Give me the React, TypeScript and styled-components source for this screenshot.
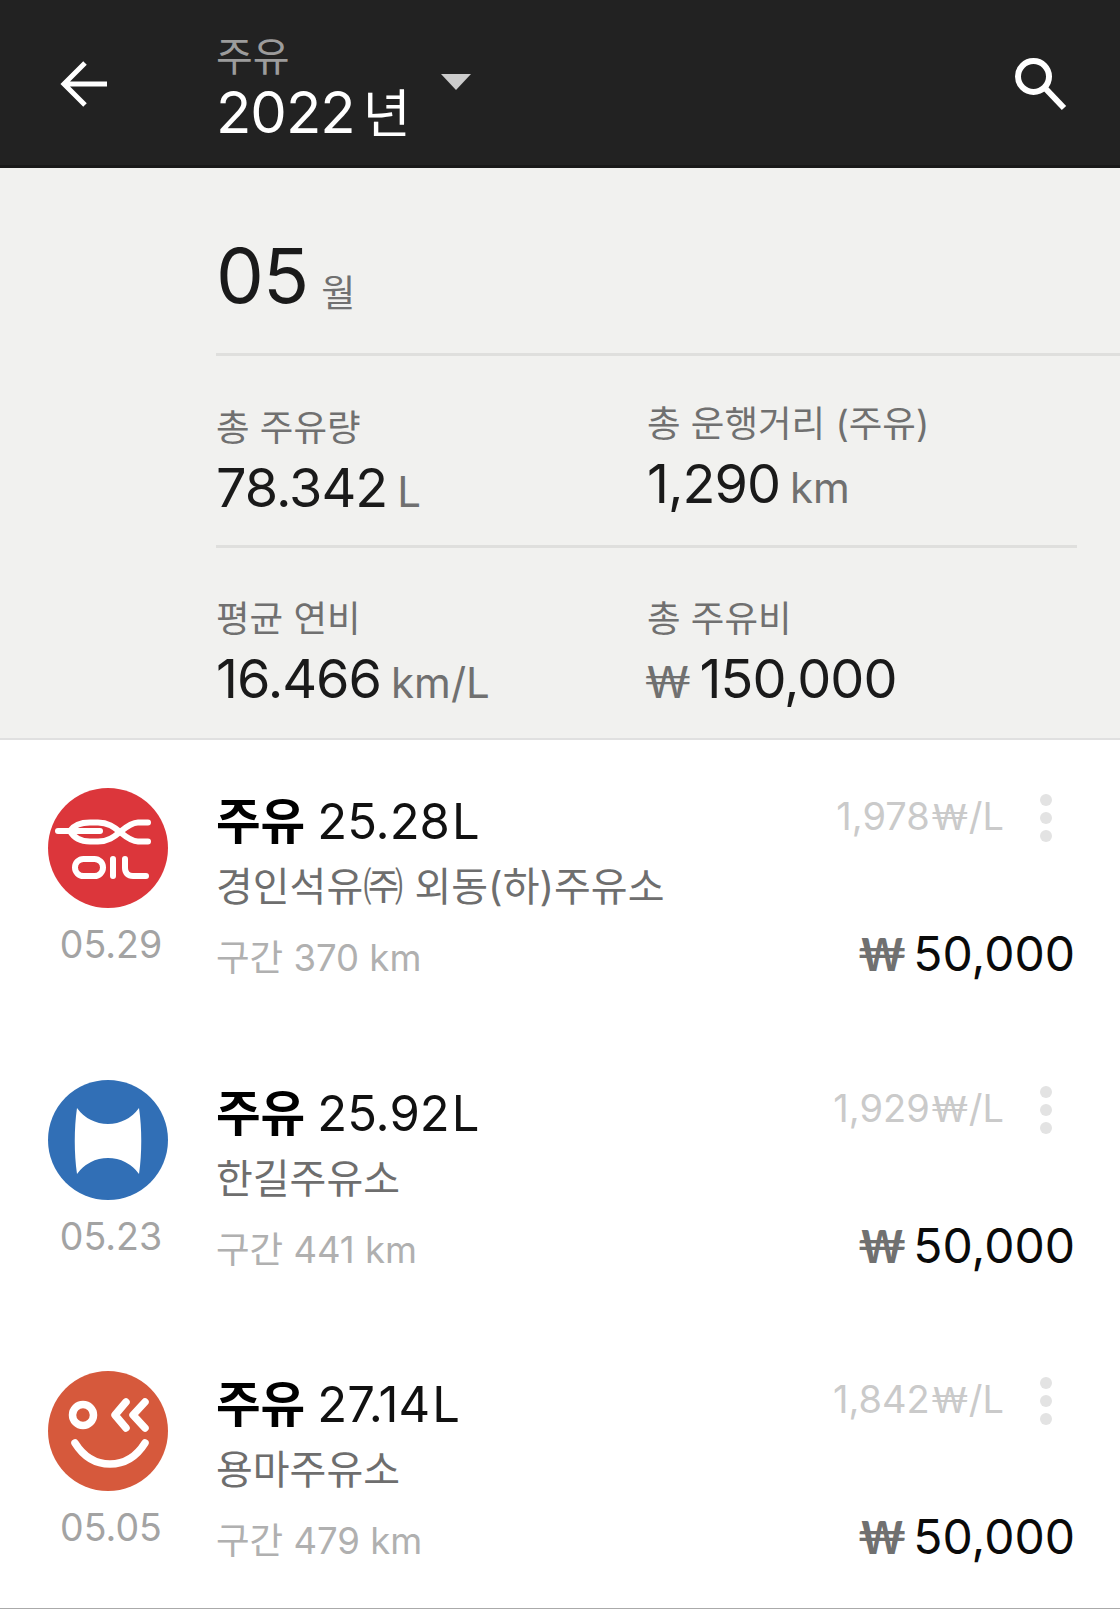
import React from "react";
import styled, { createGlobalStyle } from "styled-components";

const Global = createGlobalStyle`
  html, body { margin: 0; padding: 0; background: #fff; }
`;

const FONT = `"Inter", "Noto Sans CJK KR", sans-serif`;
const WON_FONT = `"Lato", "Inter", sans-serif`;

const Page = styled.div`
  width: 1120px;
  height: 1609px;
  box-sizing: border-box;
  overflow: hidden;
  display: flex;
  flex-direction: column;
  background: #fff;
  border-bottom: 1px solid #aaaaaa;
  font-family: ${FONT};
`;

const Header = styled.header`
  height: 165px;
  flex: none;
  background: #222222;
  border-bottom: 3px solid #191919;
  display: flex;
  align-items: flex-start;
`;

const BackButton = styled.div`
  width: 216px;
  flex: none;
  padding: 60px 0 0 60px;
  box-sizing: border-box;
  svg { display: block; }
`;

const HeaderTitle = styled.div`
  display: flex;
  flex-direction: column;
  padding-top: 34px;
  flex: 1;
`;

const HeaderSub = styled.div`
  font-size: 40px;
  line-height: 46px;
  height: 46px;
  color: #9c9c9c;
`;

const YearRow = styled.div`
  display: flex;
  align-items: baseline;
  color: #fff;
  margin-top: -4px;
`;

const Year = styled.span`
  font-size: 58px;
  line-height: 72px;
  letter-spacing: -1px;
`;

const YearUnit = styled.span`
  font-size: 52px;
  line-height: 72px;
  margin-left: 8px;
`;

const Caret = styled.div`
  width: 0;
  height: 0;
  border-left: 15px solid transparent;
  border-right: 15px solid transparent;
  border-top: 16px solid #cccccc;
  margin: -2px 0 0 30px;
  align-self: flex-start;
`;

const SearchButton = styled.div`
  padding: 58px 49px 0 0;
  svg { display: block; }
`;

const Summary = styled.section`
  flex: none;
  height: 570px;
  background: #f1f1ef;
  border-bottom: 2px solid #e0e0e0;
  padding-left: 216px;
`;

const MonthRow = styled.div`
  height: 188px;
  border-bottom: 3px solid #dfdfdd;
  display: flex;
  align-items: flex-start;
  box-sizing: border-box;
`;

const Month = styled.span`
  font-size: 76px;
  line-height: 92px;
  margin-top: 61px;
  letter-spacing: -1px;
  color: #1a1a1a;
`;

const MonthUnit = styled.span`
  font-size: 37px;
  line-height: 48px;
  margin: 102px 0 0 13px;
  color: #707070;
`;

const StatGrid = styled.div<{ $ruled?: boolean }>`
  display: grid;
  grid-template-columns: 431px 1fr;
  margin-right: 43px;
  height: ${(p) => (p.$ruled ? 192 : 190)}px;
  box-sizing: border-box;
  border-bottom: ${(p) => (p.$ruled ? "3px solid #dfdfdd" : "none")};
`;

const Stat = styled.div<{ $raised?: boolean; $low?: boolean }>`
  padding-top: ${(p) => (p.$raised ? 44 : p.$low ? 47 : 48)}px;
`;

const StatLabel = styled.div`
  font-size: 36.5px;
  line-height: 48px;
  color: #707070;
`;

const StatValue = styled.div`
  display: flex;
  align-items: baseline;
  margin-top: 3px;
  color: #1a1a1a;
  font-size: 54px;
  line-height: 66px;
  letter-spacing: -1px;
`;

const StatUnit = styled.span`
  font-size: 42px;
  letter-spacing: 0;
  color: #707070;
  margin-left: 10px;
`;

const StatWon = styled.span`
  font-family: ${WON_FONT};
  font-size: 45px;
  letter-spacing: 0;
  color: #707070;
  margin: 0 8px 0 -3px;
`;

const List = styled.div`
  display: flex;
  flex-direction: column;
`;

const Row = styled.article`
  height: 291.5px;
  flex: none;
  display: grid;
  grid-template-columns: 216px 1fr auto;
  box-sizing: border-box;
  padding-top: 48px;
`;

const BrandCol = styled.div`
  display: flex;
  flex-direction: column;
  align-items: flex-start;
  padding-left: 48px;
`;

const Logo = styled.svg`
  display: block;
  width: 120px;
  height: 120px;
`;

const DateText = styled.div`
  width: 126px;
  text-align: center;
  font-size: 37.5px;
  line-height: 44px;
  margin-top: 15px;
  color: #a3a3a3;
`;

const InfoCol = styled.div`
  display: flex;
  flex-direction: column;
  padding-top: 4px;
`;

const Title = styled.div`
  display: flex;
  align-items: baseline;
  font-size: 49px;
  line-height: 60px;
  color: #111;
`;

const TitleWord = styled.span`
  font-weight: 700;
  font-size: 48.5px;
  margin-right: 12px;
  color: #000;
`;

const TitleUnit = styled.span`
  margin-left: 2px;
`;

const Station = styled.div`
  font-size: 40px;
  line-height: 56px;
  margin-top: 7px;
  color: #6e6e6e;
`;

const Segment = styled.div`
  font-size: 36.5px;
  line-height: 52px;
  margin-top: 17px;
  color: #b0b0b0;
`;

const RightCol = styled.div`
  display: flex;
  flex-direction: column;
  align-items: flex-end;
  padding-right: 45px;
`;

const PriceLine = styled.div`
  display: flex;
  align-items: flex-start;
  height: 136px;
`;

const UnitPrice = styled.div`
  font-size: 38px;
  line-height: 50px;
  margin: 3px 36px 0 0;
  color: #cacaca;
`;

const UnitWon = styled.span`
  font-family: ${WON_FONT};
  font-size: 36px;
  margin-left: 1px;
`;

const Dots = styled.div`
  display: flex;
  flex-direction: column;
  gap: 6px;
  padding-top: 6px;
  margin-right: 23px;
`;

const Dot = styled.span`
  width: 12px;
  height: 12px;
  border-radius: 50%;
  background: #e3e3e3;
`;

const Total = styled.div`
  display: flex;
  align-items: baseline;
  font-size: 48px;
  line-height: 60px;
  color: #0a0a0a;
`;

const Won = styled.span`
  font-family: ${WON_FONT};
  font-size: 45px;
  color: #707070;
  font-weight: 700;
  margin-right: 7px;
`;

const ExLogo = () => (
  <Logo viewBox="0 0 120 120">
    <circle cx="60" cy="60" r="60" fill="#dc363b" />
    <g fill="none" stroke="#fff" strokeWidth="6" strokeLinecap="round" strokeLinejoin="round">
      <path d="M10 43H52" />
      <path d="M22 43C26 37 32 34.5 42 34.5H50C60 34.5 66 39 72 44C78 49 84 53.5 90 53.5H100" />
      <path d="M22 43C26 50 32 53.5 42 53.5H50C60 53.5 66 49 72 44C78 39 84 34.5 90 34.5H100" />
      <rect x="27" y="71" width="28" height="17" rx="8.5" />
      <path d="M65 71V88M77 71V80C77 85 80 88 85 88H98" />
    </g>
  </Logo>
);

const HanLogo = () => (
  <Logo viewBox="0 0 120 120">
    <circle cx="60" cy="60" r="60" fill="#316fb6" />
    <path fill="#fff" d="M29 28A38 38 0 0 0 91 28C94 48 94 74 91 94A38 38 0 0 0 29 94C26 74 26 48 29 28Z" />
  </Logo>
);

const OkLogo = () => (
  <Logo viewBox="0 0 120 120">
    <circle cx="60" cy="60" r="60" fill="#d6593c" />
    <g fill="none" stroke="#fff" strokeWidth="7.5" strokeLinecap="round" strokeLinejoin="round">
      <circle cx="35" cy="44" r="10.5" />
      <path d="M78 31L67 44L78 57M97 31L85 44L97 57" />
      <path d="M27 72C37 88 49 93 62 93C75 93 87 88 97 72" />
    </g>
  </Logo>
);

const records = [
  { date: "05.29", logo: <ExLogo />, liters: "25.28", station: "경인석유㈜ 외동(하)주유소", km: "구간 370 km", price: "1,978" },
  { date: "05.23", logo: <HanLogo />, liters: "25.92", station: "한길주유소", km: "구간 441 km", price: "1,929" },
  { date: "05.05", logo: <OkLogo />, liters: "27.14", station: "용마주유소", km: "구간 479 km", price: "1,842" },
];

export default function App() {
  return (
    <Page>
      <Global />
      <Header>
        <BackButton>
          <svg width="48" height="48" viewBox="0 0 48 48" fill="none" stroke="#fff" strokeWidth="5">
            <path d="M47 24H5M25 3L4 24L25 45" />
          </svg>
        </BackButton>
        <HeaderTitle>
          <HeaderSub>주유</HeaderSub>
          <YearRow>
            <Year>2022</Year>
            <YearUnit>년</YearUnit>
            <Caret />
          </YearRow>
        </HeaderTitle>
        <SearchButton>
          <svg width="56" height="56" viewBox="0 0 56 56" fill="none" stroke="#fff" strokeWidth="6">
            <circle cx="18.5" cy="18.5" r="15.5" />
            <path d="M29 29L49 50" />
          </svg>
        </SearchButton>
      </Header>
      <Summary>
        <MonthRow>
          <Month>05</Month>
          <MonthUnit>월</MonthUnit>
        </MonthRow>
        <StatGrid $ruled>
          <Stat>
            <StatLabel>총 주유량</StatLabel>
            <StatValue>78.342<StatUnit>L</StatUnit></StatValue>
          </Stat>
          <Stat $raised>
            <StatLabel>총 운행거리 (주유)</StatLabel>
            <StatValue>1,290<StatUnit>km</StatUnit></StatValue>
          </Stat>
        </StatGrid>
        <StatGrid>
          <Stat $low>
            <StatLabel>평균 연비</StatLabel>
            <StatValue>16.466<StatUnit>km/L</StatUnit></StatValue>
          </Stat>
          <Stat $low>
            <StatLabel>총 주유비</StatLabel>
            <StatValue><StatWon>₩</StatWon>150,000</StatValue>
          </Stat>
        </StatGrid>
      </Summary>
      <List>
        {records.map((r) => (
          <Row key={r.date}>
            <BrandCol>
              {r.logo}
              <DateText>{r.date}</DateText>
            </BrandCol>
            <InfoCol>
              <Title>
                <TitleWord>주유</TitleWord>
                {r.liters}
                <TitleUnit>L</TitleUnit>
              </Title>
              <Station>{r.station}</Station>
              <Segment>{r.km}</Segment>
            </InfoCol>
            <RightCol>
              <PriceLine>
                <UnitPrice>{r.price}<UnitWon>₩</UnitWon>/L</UnitPrice>
                <Dots><Dot /><Dot /><Dot /></Dots>
              </PriceLine>
              <Total><Won>₩</Won>50,000</Total>
            </RightCol>
          </Row>
        ))}
      </List>
    </Page>
  );
}
